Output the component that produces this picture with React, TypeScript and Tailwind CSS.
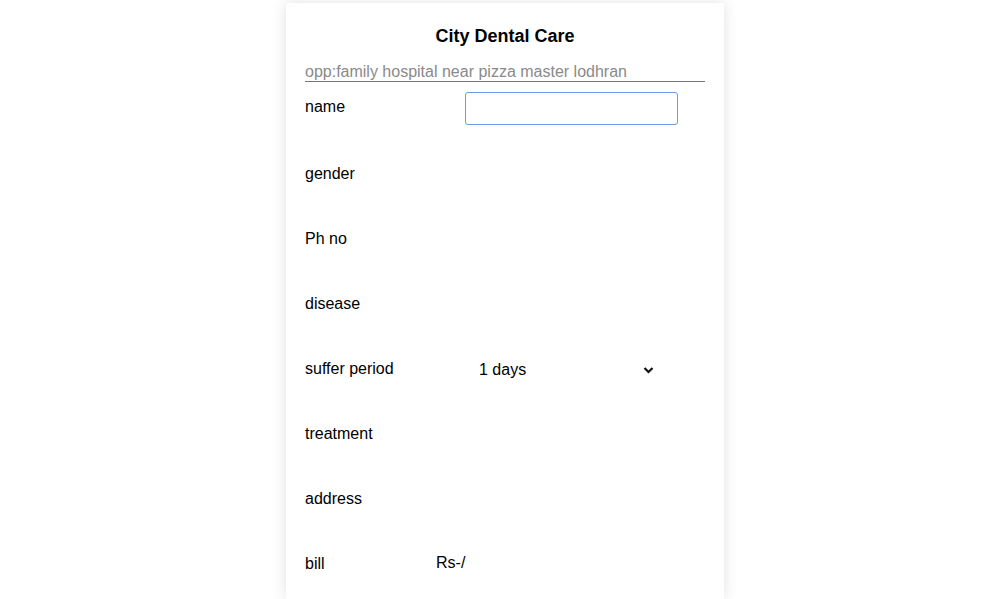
import React from "react";

const Row = ({ label, children }: { label: string; children?: React.ReactNode }) => (
  <div className="flex items-center h-[65px]">
    <div className="w-[160px] text-[16px] leading-[18px] text-black">{label}</div>
    {children}
  </div>
);

export default function App() {
  return (
    <div className="min-h-[599px] bg-white" style={{ fontFamily: '"Liberation Sans", Arial, sans-serif' }}>
      <div className="ml-[286px] mt-[3px] w-[438px] h-[596px] bg-white shadow-[0_0_14px_rgba(0,0,0,0.12)] px-[19px] pt-[23px]">
        <div className="text-center text-[18px] leading-[21px] font-bold text-black">City Dental Care</div>
        <div className="mt-[16px] border-b border-[#767676] text-[16px] leading-[18px] text-[#8a8a8a]">
          opp:family hospital near pizza master lodhran
        </div>
        <div className="flex items-start h-[59px]">
          <div className="w-[160px] pt-[16px] text-[16px] leading-[18px] text-black">name</div>
          <div className="mt-[10px] w-[213px] h-[33px] rounded-[3px] border border-[#6a9be6]"></div>
        </div>
        <Row label="gender" />
        <Row label="Ph no" />
        <Row label="disease" />
        <Row label="suffer period">
          <div className="flex items-center justify-between w-[189px] pl-[14px] pt-[2px] text-[16px] leading-[18px] text-black">
            <span>1 days</span>
            <svg width="11" height="8" viewBox="0 0 11 8">
              <path d="M1.5 2 L5.5 6 L9.5 2" fill="none" stroke="#111" strokeWidth="2.2" />
            </svg>
          </div>
        </Row>
        <Row label="treatment" />
        <Row label="address" />
        <div className="flex items-center h-[65px]">
          <div className="w-[131px] text-[16px] leading-[18px] text-black">bill</div>
          <div className="text-[16px] leading-[18px] text-black -mt-[2px]">Rs-/</div>
        </div>
      </div>
    </div>
  );
}
